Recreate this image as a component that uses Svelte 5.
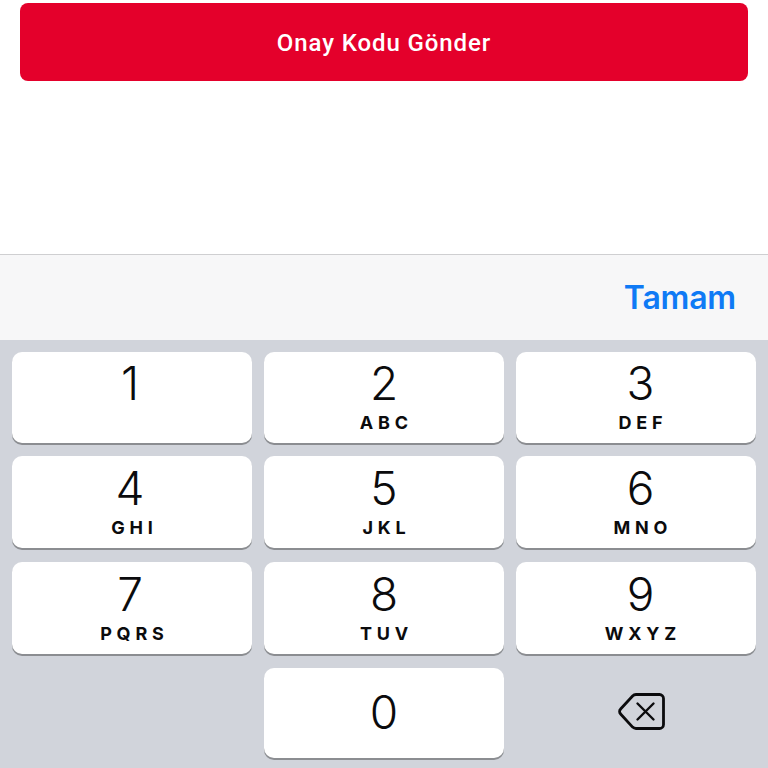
<script>
  const keys = [
    { n: '1', l: '' },
    { n: '2', l: 'ABC' },
    { n: '3', l: 'DEF' },
    { n: '4', l: 'GHI' },
    { n: '5', l: 'JKL' },
    { n: '6', l: 'MNO' },
    { n: '7', l: 'PQRS' },
    { n: '8', l: 'TUV' },
    { n: '9', l: 'WXYZ' }
  ];
</script>

<div class="screen">
  <div class="form">
    <button class="submit">Onay Kodu Gönder</button>
  </div>
  <div class="toolbar">
    <span class="done">Tamam</span>
  </div>
  <div class="keyboard">
    {#each keys as key, i}
      <div class="key" class:top={i <= 2} class:lower={i > 2}>
        <span class="num">{key.n}</span>
        <span class="letters">{key.l}</span>
      </div>
    {/each}
    <div class="blank"></div>
    <div class="key zero">
      <span class="num">0</span>
    </div>
    <div class="backspace">
      <svg width="47" height="37" viewBox="0 0 47 37" fill="none" stroke="#0b0b0d" stroke-linejoin="round" stroke-linecap="round">
        <path d="M18 1.500h23.500a4 4 0 0 1 4 4v26a4 4 0 0 1-4 4H18a5 5 0 0 1-3.400-1.400L2.600 21a3.600 3.600 0 0 1 0-5L14.600 3a5 5 0 0 1 3.400-1.500z" stroke-width="2.800"/>
        <path d="M19.500 10.500l16 16M35.500 10.500l-16 16" stroke-width="2.400"/>
      </svg>
    </div>
  </div>
</div>

<style>
  :global(body) {
    margin: 0;
    background: #fff;
  }
  .screen {
    width: 768px;
    height: 768px;
    display: flex;
    flex-direction: column;
    overflow: hidden;
    font-family: Inter, "Liberation Sans", sans-serif;
  }
  .form {
    height: 254px;
    padding: 3px 20px 0;
    box-sizing: border-box;
  }
  .submit {
    display: block;
    width: 100%;
    height: 78px;
    padding: 2px 0 0;
    border: 0;
    border-radius: 8px;
    background: #e4002b;
    color: #fff;
    font-family: Roboto, "Liberation Sans", sans-serif;
    font-size: 24px;
    font-weight: 500;
    letter-spacing: 0.9px;
  }
  .toolbar {
    height: 86px;
    box-sizing: border-box;
    border-top: 1px solid #cfcfd1;
    background: #f7f7f8;
    display: flex;
    align-items: center;
    justify-content: flex-end;
    padding: 0 32px 0 0;
  }
  .done {
    color: #0f7af5;
    font-size: 32px;
    font-weight: 570;
    letter-spacing: -0.2px;
  }
  .keyboard {
    flex: 1;
    background: #d1d4db;
    padding: 12px 12px 0;
    display: grid;
    grid-template-columns: repeat(3, 240px);
    grid-template-rows: 90px 92px 92px 90px;
    column-gap: 12px;
    row-gap: 14px;
  }
  .key {
    background: #fff;
    border-radius: 10px;
    box-shadow: 0 2px 0 #8b8d91;
    display: flex;
    flex-direction: column;
    align-items: center;
    color: #0b0b0d;
  }
  .top {
    margin-bottom: -1px;
  }
  /* the digits in the reference are not centred on the outer columns */
  .key:nth-child(3n + 1) .num {
    margin-right: 4px;
  }
  .key:nth-child(3n) {
    padding-left: 9px;
    box-sizing: border-box;
  }
  .num {
    font-size: 46px;
    font-weight: 360;
    line-height: 56px;
    margin-top: 3px;
  }
  .lower .num {
    margin-top: 4px;
  }
  .letters {
    font-size: 18px;
    font-weight: 650;
    line-height: 20px;
    letter-spacing: 4.800px;
    margin-right: -4.800px;
    margin-top: 2px;
  }
  .zero {
    justify-content: center;
  }
  .zero .num {
    margin-top: 0;
    margin-bottom: 3px;
  }
  .backspace {
    display: flex;
    align-items: center;
    justify-content: center;
    padding-left: 10px;
    padding-bottom: 4px;
  }
</style>
